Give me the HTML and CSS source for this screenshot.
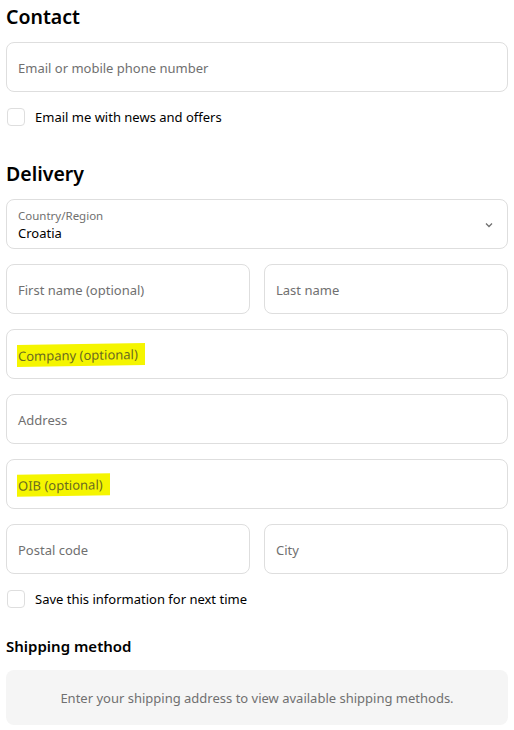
FILE: index.html
```html
<!DOCTYPE html>
<html lang="en">
<head>
    <meta charset="UTF-8">
    <meta name="viewport" content="width=device-width, initial-scale=1.0">
    <link rel="stylesheet" href="styles.css">
    <title>Checkout</title>
</head>
<body>
    <div class="checkout">
        <h2>Contact</h2>
        <div class="field"><span class="ph">Email or mobile phone number</span></div>
        <label class="check"><span class="box"></span>Email me with news and offers</label>

        <h2 class="delivery">Delivery</h2>
        <div class="field select">
            <div class="sel-text">
                <span class="small">Country/Region</span>
                <span class="value">Croatia</span>
            </div>
            <svg class="chev" width="12" height="12" viewBox="0 0 12 12"><path d="M3 4.5 L6 7.5 L9 4.5" fill="none" stroke="#707070" stroke-width="1.3"/></svg>
        </div>
        <div class="row">
            <div class="field"><span class="ph">First name (optional)</span></div>
            <div class="field"><span class="ph">Last name</span></div>
        </div>
        <div class="field"><span class="ph mark">Company (optional)</span></div>
        <div class="field"><span class="ph">Address</span></div>
        <div class="field"><span class="ph mark">OIB (optional)</span></div>
        <div class="row">
            <div class="field"><span class="ph">Postal code</span></div>
            <div class="field"><span class="ph">City</span></div>
        </div>
        <label class="check save"><span class="box"></span>Save this information for next time</label>

        <h3>Shipping method</h3>
        <div class="notice">Enter your shipping address to view available shipping methods.</div>
    </div>
</body>
</html>
```

FILE: styles.css
```css
*{
    padding: 0;
    margin: 0;
    box-sizing: border-box;
}
body{
    font-family: "Noto Sans", sans-serif;
    background: #fff;
    color: #000;
}
.checkout{
    width: 502px;
    margin-left: 6px;
    display: flex;
    flex-direction: column;
    gap: 15px;
}
h2{
    font-size: 19.5px;
    font-weight: 600;
    line-height: 28px;
    margin-top: 3px;
    margin-bottom: -4px;
}
h2.delivery{
    margin-top: 20px;
}
.field{
    height: 50px;
    border: 1px solid #dedede;
    border-radius: 8px;
    padding: 0 11px;
    display: flex;
    align-items: center;
    font-size: 13px;
    padding-top: 1px;
}
.ph{
    color: #707070;
}
.mark{
    background: #f5f500;
    color: #6a6a20;
    padding: 2px 7px 2px 1px;
    margin-left: -1px;
    transform: skewY(-1deg);
}
.select{
    justify-content: space-between;
}
.sel-text{
    display: flex;
    flex-direction: column;
    padding-top: 2px;
}
.small{
    font-size: 11.5px;
    color: #707070;
    line-height: 16px;
}
.value{
    font-size: 13px;
    line-height: 19px;
}
.chev{
    margin-right: 1px;
}
.row{
    display: flex;
    gap: 14px;
}
.row .field{
    flex: 1;
}
.check{
    display: flex;
    align-items: center;
    gap: 10px;
    font-size: 13px;
    margin-top: 1px;
    margin-bottom: -1px;
}
.check .box{
    width: 18px;
    height: 18px;
    border: 1px solid #dedede;
    border-radius: 4px;
    margin-left: 1px;
}
h3{
    font-size: 15px;
    font-weight: 600;
    margin-top: 14px;
    margin-bottom: -1px;
}
.notice{
    background: #f5f5f5;
    border-radius: 8px;
    height: 55px;
    display: flex;
    align-items: center;
    justify-content: center;
    font-size: 13px;
    color: #707070;
}
```
